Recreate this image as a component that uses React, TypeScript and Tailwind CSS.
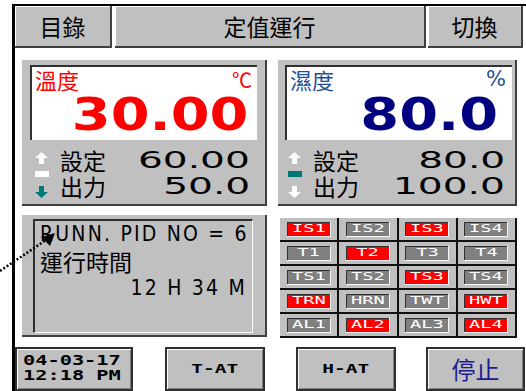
import React from "react";

const cjk = "font-['Noto_Sans_CJK_TC','Noto_Sans_CJK_SC',sans-serif]";
const wide = "font-['DejaVu_Sans',sans-serif]";
const mono = "font-['DejaVu_Sans_Mono',monospace]";
const narrow = "font-['Liberation_Sans_Narrow','DejaVu_Sans_Condensed',sans-serif]";

const UpArrow = ({ color }: { color: string }) => (
  <svg width="13" height="12" viewBox="0 0 13 12">
    <path d="M6.5 0 L13 6 L9 6 L9 12 L4 12 L4 6 L0 6 Z" fill={color} />
  </svg>
);

const DownArrow = ({ color }: { color: string }) => (
  <svg width="13" height="12" viewBox="0 0 13 12">
    <path d="M4 0 L9 0 L9 6 L13 6 L6.5 12 L0 6 L4 6 Z" fill={color} />
  </svg>
);

const HeadButton = ({ label, w }: { label: string; w: string }) => (
  <div
    className={`${w} h-full flex items-center justify-center bg-[#c0c0c0] border-r-2 border-b-2 border-[#404040] shadow-[inset_1px_1px_0_#ffffff] ${cjk} text-[23px] text-black`}
  >
    {label}
  </div>
);

const statuses: [string, boolean][][] = [
  [["IS1", true], ["IS2", false], ["IS3", true], ["IS4", false]],
  [["T1", false], ["T2", true], ["T3", false], ["T4", false]],
  [["TS1", false], ["TS2", false], ["TS3", true], ["TS4", false]],
  [["TRN", true], ["HRN", false], ["TWT", false], ["HWT", true]],
  [["AL1", false], ["AL2", true], ["AL3", false], ["AL4", true]],
];

const BottomButton = ({ children, w }: { children: React.ReactNode; w: string }) => (
  <div
    className={`${w} h-[44px] flex items-center justify-center bg-[#c0c0c0] border-2 border-[#303030] shadow-[inset_1px_1px_0_#ffffff,inset_-1px_-1px_0_#808080]`}
  >
    {children}
  </div>
);

export default function App() {
  return (
    <div className="relative w-[526px] h-[391px] bg-white overflow-hidden">
      <div className="ml-[12px] mt-[4px] h-[387px] border-l-[3px] border-t-2 border-black">
        {/* header */}
        <div className="flex h-[42px]">
          <HeadButton label="目錄" w="w-[97px]" />
          <div className="w-[3px]" />
          <HeadButton label="定值運行" w="w-[311px]" />
          <div className="w-[2px]" />
          <HeadButton label="切換" w="w-[95px]" />
        </div>

        {/* readings */}
        <div className="flex mt-[12px] pl-[7px]">
          <div className="w-[245px] h-[146px] bg-[#c0c0c0] border-r-2 border-b-2 border-[#404040] pl-[8px] pt-[5px]">
            <div className="w-[227px] h-[75px] bg-white border-l-2 border-t-2 border-[#303030] flex flex-col">
              <div className="flex justify-between h-[25px] pl-[3px] pr-[5px]">
                <span className={`${cjk} text-[22px] leading-[25px] text-[#ff0000]`}>溫度</span>
                <span className={`${cjk} text-[20px] leading-[25px] text-[#ff0000]`}>℃</span>
              </div>
              <div className="flex justify-end pr-[9px]">
                <span className={`${wide} inline-block origin-right scale-x-[1.24] font-bold text-[45px] leading-[45px] text-[#ff0000]`}>
                  30.00
                </span>
              </div>
            </div>
            <div className="flex mt-[7px] pl-[5px]">
              <div className="w-[14px] flex flex-col pt-[5px]">
                <UpArrow color="#ffffff" />
                <div className="mt-[7px] w-[14px] h-[6px] bg-white" />
                <div className="mt-[9px]">
                  <DownArrow color="#007878" />
                </div>
              </div>
              <div className="flex-1 ml-[11px] pr-[15px]">
                <div className="flex justify-between h-[26px] items-center">
                  <span className={`${cjk} text-[23px] leading-[26px] text-black`}>設定</span>
                  <span className={`${wide} inline-block origin-right scale-x-[1.7] text-[23px] leading-[26px] text-black`}>60.00</span>
                </div>
                <div className="flex justify-between h-[26px] items-center">
                  <span className={`${cjk} text-[23px] leading-[26px] text-black`}>出力</span>
                  <span className={`${wide} inline-block origin-right scale-x-[1.7] text-[23px] leading-[26px] text-black`}>50.0</span>
                </div>
              </div>
            </div>
          </div>

          <div className="ml-[11px] w-[239px] h-[146px] bg-[#c0c0c0] border-r-2 border-b-2 border-[#404040] pl-[7px] pt-[5px]">
            <div className="w-[227px] h-[75px] bg-white border-l-2 border-t-2 border-[#303030] flex flex-col">
              <div className="flex justify-between h-[25px] pl-[3px] pr-[6px]">
                <span className={`${cjk} text-[22px] leading-[25px] text-[#1f4f96]`}>濕度</span>
                <span className={`${wide} text-[21px] leading-[25px] text-[#1f4f96]`}>%</span>
              </div>
              <div className="flex justify-end pr-[14px]">
                <span className={`${wide} inline-block origin-right scale-x-[1.24] font-bold text-[45px] leading-[45px] text-[#000080]`}>
                  80.0
                </span>
              </div>
            </div>
            <div className="flex mt-[7px] pl-[3px]">
              <div className="w-[14px] flex flex-col pt-[5px]">
                <UpArrow color="#ffffff" />
                <div className="mt-[7px] w-[14px] h-[6px] bg-[#007878]" />
                <div className="mt-[9px]">
                  <DownArrow color="#ffffff" />
                </div>
              </div>
              <div className="flex-1 ml-[11px] pr-[10px]">
                <div className="flex justify-between h-[26px] items-center">
                  <span className={`${cjk} text-[23px] leading-[26px] text-black`}>設定</span>
                  <span className={`${wide} inline-block origin-right scale-x-[1.7] text-[23px] leading-[26px] text-black`}>80.0</span>
                </div>
                <div className="flex justify-between h-[26px] items-center">
                  <span className={`${cjk} text-[23px] leading-[26px] text-black`}>出力</span>
                  <span className={`${wide} inline-block origin-right scale-x-[1.7] text-[23px] leading-[26px] text-black`}>100.0</span>
                </div>
              </div>
            </div>
          </div>
        </div>

        {/* run info + status grid */}
        <div className="flex items-start mt-[9px] pl-[7px]">
          <div className="w-[245px] h-[122px] bg-[#c0c0c0] border-r-2 border-b-2 border-[#404040] pl-[11px] pt-[4px]">
            <div className="w-[220px] h-[114px] border-l-2 border-t-2 border-[#303030] border-r border-b border-r-white border-b-white pl-[5px] pr-[5px]">
              <div className={`${narrow} text-[21px] leading-[27px] tracking-[2.2px] text-black whitespace-nowrap`}>RUNN. PID NO = 6</div>
              <div className={`${cjk} text-[23px] leading-[27px] text-black`}>運行時間</div>
              <div className={`${narrow} text-[21px] leading-[27px] tracking-[2.2px] text-black text-right`}>12 H 34 M</div>
            </div>
          </div>

          <div className="ml-[13px] mt-[3px] w-[237px] grid grid-cols-4">
            {statuses.flat().map(([name, on]) => (
              <div
                key={name}
                className="h-[24px] flex items-center justify-center bg-[#c0c0c0] border-r-2 border-b-2 border-[#101010]"
              >
                <div className="border-b border-r border-[#f4f4f4]">
                  <div
                    className={`w-[43px] h-[14px] flex items-center justify-center border-t border-l border-[#303030] ${on ? "bg-[#ff0000]" : "bg-[#808080]"}`}
                  >
                    <span className={`${mono} inline-block origin-center scale-x-[1.7] text-[11px] leading-[12px] text-white`}>
                      {name}
                    </span>
                  </div>
                </div>
              </div>
            ))}
          </div>
        </div>

        {/* bottom buttons */}
        <div className="flex mt-[9px]">
          <BottomButton w="w-[118px]">
            <div className={`${mono} font-bold text-[14px] leading-[15px] text-black w-full pl-[6px] -mt-[2px]`}>
              <div className="origin-left scale-x-[1.45]">04-03-17</div>
              <div className="origin-left scale-x-[1.45]">12:18 PM</div>
            </div>
          </BottomButton>
          <div className="w-[32px]" />
          <BottomButton w="w-[100px]">
            <span className={`${mono} inline-block scale-x-[1.5] font-bold text-[13px] text-black`}>T-AT</span>
          </BottomButton>
          <div className="w-[31px]" />
          <BottomButton w="w-[100px]">
            <span className={`${mono} inline-block scale-x-[1.5] font-bold text-[13px] text-black`}>H-AT</span>
          </BottomButton>
          <div className="w-[30px]" />
          <BottomButton w="w-[99px]">
            <span className={`${cjk} text-[24px] text-[#1c1c8f]`}>停止</span>
          </BottomButton>
        </div>
      </div>

      {/* annotation arrow */}
      <svg className="absolute left-0 top-[228px]" width="60" height="48" viewBox="0 0 60 48">
        <line x1="0" y1="43" x2="46" y2="12" stroke="#000" strokeWidth="2.5" strokeDasharray="2 2" />
        <path d="M55 5 L41 9 L50 18 Z" fill="#000" />
      </svg>
    </div>
  );
}
